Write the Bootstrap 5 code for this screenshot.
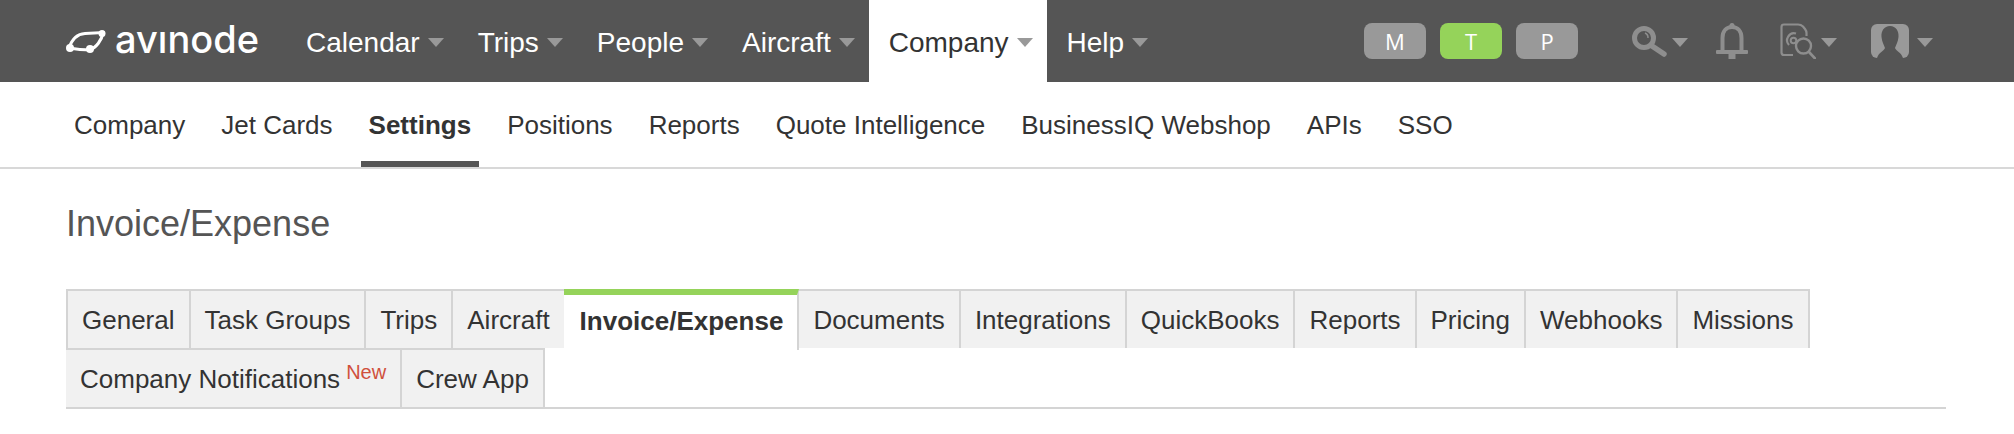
<!DOCTYPE html>
<html lang="en">
<head>
<meta charset="utf-8">
<title>Invoice/Expense</title>
<link href="https://cdn.jsdelivr.net/npm/bootstrap@5.3.0/dist/css/bootstrap.min.css" rel="stylesheet">
<style>
body{font-family:"Liberation Sans",Arial,sans-serif;color:#333;background:#fff}
.topbar{height:82px;background:#555;padding:0 81px 0 66px}
.brand{width:220px;color:#fff;text-decoration:none;gap:8px}
.brand-word{font-family:Inter,"Liberation Sans",sans-serif;font-size:38px;font-weight:500;letter-spacing:0;line-height:1;color:#fff;position:relative;top:-2px}
.brand-i{display:inline-block;clip-path:inset(.3em 0 0 0)}
.mainnav .nav-link{height:82px;padding:4px 14px 0 20px;font-size:28px;color:#fff;display:flex;align-items:center}
.mainnav .nav-link.current{background:#fff;color:#333}
.dropdown-toggle::after{border-top:9px solid #999;border-left:8px solid transparent;border-right:8px solid transparent;border-bottom:0;margin-left:8px;vertical-align:middle}
.mainnav .dropdown-toggle::after{position:relative;top:-1px}
.mode-pill{width:62px;height:36px;border-radius:8px;background:#999;color:#fff;font-family:"Open Sans",sans-serif;font-weight:400;font-size:22px;line-height:36px;text-align:center;padding:0;border:0}
.mode-pill.on{background:#95d35a}
.pills{gap:14px;margin-right:54px}
.tool{color:#8e8e8e;text-decoration:none}
.tool:hover{color:#8e8e8e}
.tool svg{display:block}
.tool.dropdown-toggle::after{margin-left:5px;position:relative;top:1px}
.gap-bell{margin-left:28px}
.gap-doc{margin-left:32px}
.gap-user{margin-left:34px}
.user-tool.dropdown-toggle::after{margin-left:8px}
.subbar{height:87px;border-bottom:2px solid #d8d8d8;padding:0 66px}
.subbar .nav-link{height:85px;padding:8px 8px 0;margin-right:20px;font-size:26px;color:#333;display:flex;align-items:center;border-bottom:6px solid transparent}
.subbar .nav-link.current{font-weight:700;border-bottom-color:#555}
.page-title{font-size:36px;font-weight:400;color:#555;margin:33px 0 0;line-height:44px}
.content{padding:0 68px 0 66px}
.tabstrip{margin-top:43px;border-bottom:2px solid #d4d4d4;align-items:flex-start}
.tabstrip .nav-link{height:59px;padding:0 14px;font-size:26px;line-height:58px;color:#333;background:#f1f1f1;border-top:2px solid #d4d4d4;border-left:2px solid #d4d4d4}
.tabstrip .nav-link.last{border-right:2px solid #d4d4d4}
.tabstrip .nav-link.current{height:61px;margin-bottom:-2px;position:relative;background:#fff;font-weight:700;border-top:6px solid #95d35a;line-height:53px;border-left:0;border-right:2px solid #d4d4d4;padding:0 14px 0 16px}
.tab-break{flex-basis:100%;height:0}
.tag-new{color:#d0503c;font-size:20px;margin-left:6px;vertical-align:9px;line-height:0}
</style>
</head>
<body>
<header class="topbar d-flex align-items-center justify-content-between">
  <div class="d-flex align-items-center">
    <a class="brand d-flex align-items-center" href="#">
      <svg width="41" height="23" viewBox="0 0 41 23" aria-hidden="true">
        <path d="M3 18C6 9 12 4 19 3.500L37 2.500C36 10 30 18 24 19.500C17 20.500 10 19 3 18Z" fill="none" stroke="#fff" stroke-width="3"/>
        <circle cx="4" cy="18" r="4" fill="#fff"/>
        <circle cx="24" cy="19" r="4" fill="#fff"/>
        <circle cx="36" cy="3.500" r="3.500" fill="#fff"/>
      </svg>
      <span class="brand-word">av<span class="brand-i">i</span>node</span>
    </a>
    <ul class="nav mainnav">
      <li class="nav-item"><a class="nav-link dropdown-toggle" href="#">Calendar</a></li>
      <li class="nav-item"><a class="nav-link dropdown-toggle" href="#">Trips</a></li>
      <li class="nav-item"><a class="nav-link dropdown-toggle" href="#">People</a></li>
      <li class="nav-item"><a class="nav-link dropdown-toggle" href="#">Aircraft</a></li>
      <li class="nav-item"><a class="nav-link dropdown-toggle current" href="#">Company</a></li>
      <li class="nav-item"><a class="nav-link dropdown-toggle" href="#">Help</a></li>
    </ul>
  </div>
  <div class="d-flex align-items-center">
    <div class="d-flex pills">
      <button class="btn mode-pill" type="button">M</button>
      <button class="btn mode-pill on" type="button">T</button>
      <button class="btn mode-pill" type="button">P</button>
    </div>
    <a class="tool dropdown-toggle d-flex align-items-center" href="#" aria-label="Search">
      <svg width="35" height="32" viewBox="0 0 35 32" aria-hidden="true">
        <circle cx="12" cy="13" r="9.500" fill="none" stroke="currentColor" stroke-width="5"/>
        <path d="M13 8a5 5 0 0 1 3 5" fill="none" stroke="currentColor" stroke-width="1.500"/>
        <path d="M20 21L32 29" stroke="currentColor" stroke-width="5.500" stroke-linecap="round"/>
      </svg>
    </a>
    <a class="tool gap-bell" href="#" aria-label="Notifications">
      <svg width="32" height="37" viewBox="0 0 32 37" aria-hidden="true">
        <path d="M6.500 28V15C6.500 8 10.500 4 16 4C21.500 4 25.500 8 25.500 15V28" fill="none" stroke="currentColor" stroke-width="4"/>
        <rect x="13.500" y="0" width="5" height="5" rx="2.500" fill="currentColor"/>
        <rect x="0" y="27" width="32" height="4" rx="1" fill="currentColor"/>
        <rect x="12.500" y="31" width="7" height="5" fill="currentColor"/>
      </svg>
    </a>
    <a class="tool gap-doc dropdown-toggle d-flex align-items-center" href="#" aria-label="Document search">
      <svg width="36" height="36" viewBox="0 0 36 36" aria-hidden="true">
        <path d="M13 32H4Q1.500 32 1.500 29.500V4Q1.500 1.500 4 1.500H18Q21 1.500 23 3.500L25 6Q26.500 8 26.500 10V13" fill="none" stroke="currentColor" stroke-width="2.200"/>
        <path d="M9 22A7 7 0 0 1 16 10.500" fill="none" stroke="currentColor" stroke-width="2.200"/>
        <circle cx="13.500" cy="17.500" r="2.800" fill="none" stroke="currentColor" stroke-width="2"/>
        <circle cx="23.500" cy="23" r="7.500" fill="none" stroke="currentColor" stroke-width="2.400"/>
        <path d="M29 29L35 35.500" stroke="currentColor" stroke-width="2.600" stroke-linecap="round"/>
      </svg>
    </a>
    <a class="tool user-tool gap-user dropdown-toggle d-flex align-items-center" href="#" aria-label="User">
      <svg width="38" height="34" viewBox="0 0 38 34" aria-hidden="true">
        <rect width="38" height="34" rx="6" fill="#999"/>
        <path d="M19 2C13 2 10 7 10.500 13C11 18 13 21 14 24C13 27 8 28 6 34H32C30 28 25 27 24 24C25 21 27 18 27.500 13C28 7 25 2 19 2Z" fill="#555"/>
      </svg>
    </a>
  </div>
</header>
<nav class="subbar">
  <ul class="nav">
    <li class="nav-item"><a class="nav-link" href="#">Company</a></li>
    <li class="nav-item"><a class="nav-link" href="#">Jet Cards</a></li>
    <li class="nav-item"><a class="nav-link current" href="#">Settings</a></li>
    <li class="nav-item"><a class="nav-link" href="#">Positions</a></li>
    <li class="nav-item"><a class="nav-link" href="#">Reports</a></li>
    <li class="nav-item"><a class="nav-link" href="#">Quote Intelligence</a></li>
    <li class="nav-item"><a class="nav-link" href="#">BusinessIQ Webshop</a></li>
    <li class="nav-item"><a class="nav-link" href="#">APIs</a></li>
    <li class="nav-item"><a class="nav-link" href="#">SSO</a></li>
  </ul>
</nav>
<main class="content">
  <h1 class="page-title">Invoice/Expense</h1>
  <ul class="nav flex-wrap tabstrip">
    <li class="nav-item"><a class="nav-link" href="#">General</a></li>
    <li class="nav-item"><a class="nav-link" href="#">Task Groups</a></li>
    <li class="nav-item"><a class="nav-link" href="#">Trips</a></li>
    <li class="nav-item"><a class="nav-link" href="#">Aircraft</a></li>
    <li class="nav-item"><a class="nav-link current" href="#">Invoice/Expense</a></li>
    <li class="nav-item"><a class="nav-link border-start-0" href="#">Documents</a></li>
    <li class="nav-item"><a class="nav-link" href="#">Integrations</a></li>
    <li class="nav-item"><a class="nav-link" href="#">QuickBooks</a></li>
    <li class="nav-item"><a class="nav-link" href="#">Reports</a></li>
    <li class="nav-item"><a class="nav-link" href="#">Pricing</a></li>
    <li class="nav-item"><a class="nav-link" href="#">Webhooks</a></li>
    <li class="nav-item"><a class="nav-link last" href="#">Missions</a></li>
    <li class="tab-break" aria-hidden="true"></li>
    <li class="nav-item"><a class="nav-link border-start-0" href="#">Company Notifications<span class="tag-new">New</span></a></li>
    <li class="nav-item"><a class="nav-link last" href="#">Crew App</a></li>
  </ul>
</main>
<script src="https://cdn.jsdelivr.net/npm/bootstrap@5.3.0/dist/js/bootstrap.bundle.min.js"></script>
</body>
</html>
